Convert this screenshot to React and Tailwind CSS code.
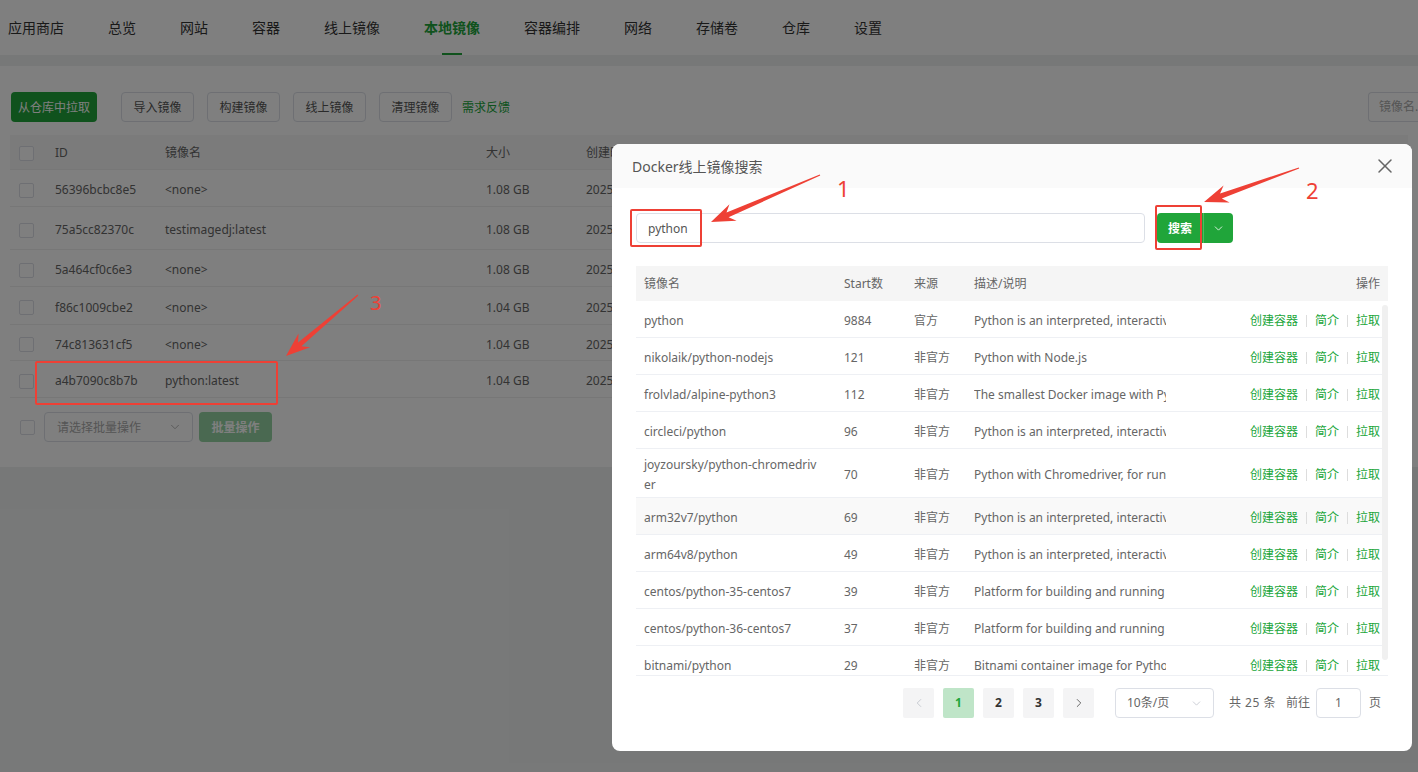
import React from 'react';
import { X, ChevronDown, ChevronLeft, ChevronRight } from 'lucide-react';

const navItems = ['应用商店', '总览', '网站', '容器', '线上镜像', '本地镜像', '容器编排', '网络', '存储卷', '仓库', '设置'];

const localImages = [
  { id: '56396bcbc8e5', name: '<none>', size: '1.08 GB', h: 'h-[37px]' },
  { id: '75a5cc82370c', name: 'testimagedj:latest', size: '1.08 GB', h: 'h-[43px]' },
  { id: '5a464cf0c6e3', name: '<none>', size: '1.08 GB', h: 'h-[37px]' },
  { id: 'f86c1009cbe2', name: '<none>', size: '1.04 GB', h: 'h-[38px]' },
  { id: '74c813631cf5', name: '<none>', size: '1.04 GB', h: 'h-[36px]' },
  { id: 'a4b7090c8b7b', name: 'python:latest', size: '1.04 GB', h: 'h-[37px]' },
];

const results = [
  { name: ['python'], stars: 9884, src: '官方', desc: 'Python is an interpreted, interactive, object-oriented, open-source programming language.' },
  { name: ['nikolaik/python-nodejs'], stars: 121, src: '非官方', desc: 'Python with Node.js' },
  { name: ['frolvlad/alpine-python3'], stars: 112, src: '非官方', desc: 'The smallest Docker image with Python 3.5 (~61MB)' },
  { name: ['circleci/python'], stars: 96, src: '非官方', desc: 'Python is an interpreted, interactive, object-oriented' },
  { name: ['joyzoursky/python-chromedriv', 'er'], stars: 70, src: '非官方', desc: 'Python with Chromedriver, for running automated tests', tall: true },
  { name: ['arm32v7/python'], stars: 69, src: '非官方', desc: 'Python is an interpreted, interactive, object-oriented', hover: true },
  { name: ['arm64v8/python'], stars: 49, src: '非官方', desc: 'Python is an interpreted, interactive, object-oriented' },
  { name: ['centos/python-35-centos7'], stars: 39, src: '非官方', desc: 'Platform for building and running Python 3.5 applications' },
  { name: ['centos/python-36-centos7'], stars: 37, src: '非官方', desc: 'Platform for building and running Python 3.6 applications' },
  { name: ['bitnami/python'], stars: 29, src: '非官方', desc: 'Bitnami container image for Python' },
];

const Checkbox = () => (
  <span className="block w-[15px] h-[15px] border border-[#dcdfe6] rounded-[2px] bg-white" />
);

const OutlineBtn = ({ children, className = '' }) => (
  <button className={`h-[30px] w-[73px] pt-[2px] border border-[#dcdfe6] rounded-[4px] bg-white text-[12px] text-[#555] ${className}`}>
    {children}
  </button>
);

// tapered arrow like the screenshot tool draws
const Arrow = ({ x1, y1, x2, y2 }) => {
  const dx = x2 - x1, dy = y2 - y1, L = Math.hypot(dx, dy);
  const ux = dx / L, uy = dy / L, nx = -uy, ny = ux;
  const head = 24, wing = 9, shaft = 2.6;
  const bx = x2 - ux * head, by = y2 - uy * head;
  const sx = x2 - ux * (head - 6), sy = y2 - uy * (head - 6);
  const pts = [
    [x1 + nx * 0.6, y1 + ny * 0.6],
    [sx + nx * shaft, sy + ny * shaft],
    [bx + nx * wing, by + ny * wing],
    [x2, y2],
    [bx - nx * wing, by - ny * wing],
    [sx - nx * shaft, sy - ny * shaft],
    [x1 - nx * 0.6, y1 - ny * 0.6],
  ];
  return <polygon points={pts.map((p) => p.join(',')).join(' ')} fill="#ee4035" />;
};

export default function App() {
  return (
    <div className="relative w-[1418px] h-[772px] overflow-hidden bg-[#eff1f1] font-['Noto_Sans','Noto_Sans_CJK_SC',sans-serif]">
      {/* top navigation */}
      <div className="h-[55px] bg-white flex items-stretch pl-[8px] gap-[44px] text-[14px] text-[#333]">
        {navItems.map((n) => (
          <div key={n} className={`relative flex items-center ${n === '本地镜像' ? 'text-[#20a53a] font-semibold' : ''}`}>
            {n}
            {n === '本地镜像' && (
              <span className="absolute bottom-0 left-1/2 -translate-x-1/2 w-[20px] h-[2px] bg-[#20a53a]" />
            )}
          </div>
        ))}
      </div>

      {/* local image list */}
      <div className="mt-[11px] bg-white px-[10px] pt-[26px] pb-[25px]">
        <div className="flex items-center -mr-[10px]">
          <button className="h-[30px] w-[86px] ml-[1px] pt-[2px] rounded-[4px] bg-[#20a53a] text-white text-[12px]">从仓库中拉取</button>
          <OutlineBtn className="ml-[24px]">导入镜像</OutlineBtn>
          <OutlineBtn className="ml-[13px]">构建镜像</OutlineBtn>
          <OutlineBtn className="ml-[13px]">线上镜像</OutlineBtn>
          <OutlineBtn className="ml-[13px]">清理镜像</OutlineBtn>
          <span className="ml-[10px] pt-[2px] text-[12px] text-[#20a53a]">需求反馈</span>
          <div className="ml-auto w-[50px] h-[30px] border border-r-0 border-[#dcdfe6] rounded-l-[4px] flex items-center pl-[10px] text-[12px] text-[#aaa] overflow-hidden whitespace-nowrap">
            镜像名...
          </div>
        </div>

        <div className="mt-[13px] text-[12px] text-[#666]">
          <div className="h-[35px] pt-[2px] bg-[#f7f7f7] flex items-center border-b border-[#eee]">
            <div className="w-[35px] pl-[9px]"><Checkbox /></div>
            <div className="w-[120px] pl-[10px]">ID</div>
            <div className="w-[321px]">镜像名</div>
            <div className="w-[100px]">大小</div>
            <div className="flex-1">创建时间</div>
          </div>
          {localImages.map((r) => (
            <div key={r.id} className={`${r.h} pt-[4px] flex items-center border-b border-[#eee]`}>
              <div className="w-[35px] pl-[9px]"><Checkbox /></div>
              <div className="w-[120px] pl-[10px]">{r.id}</div>
              <div className="w-[321px]">{r.name}</div>
              <div className="w-[100px]">{r.size}</div>
              <div className="flex-1">2025-03-18 15:42:10</div>
            </div>
          ))}
          <div className="pt-[14px] flex items-center">
            <div className="pl-[10px]"><Checkbox /></div>
            <div className="ml-[9px] w-[149px] h-[30px] border border-[#dcdfe6] rounded-[4px] flex items-center justify-between pl-[12px] pr-[10px] text-[#aaa]">
              <span className="pt-[2px]">请选择批量操作</span>
              <ChevronDown size={14} strokeWidth={1.5} className="text-[#aaa]" />
            </div>
            <button className="ml-[6px] w-[73px] h-[30px] pt-[2px] rounded-[4px] bg-[#94d3a2] text-white text-[12px] font-semibold">批量操作</button>
          </div>
        </div>
      </div>

      {/* mask */}
      <div className="absolute inset-0 bg-black/50" />

      {/* dialog */}
      <div className="absolute left-[612px] top-[144px] w-[800px] h-[607px] bg-white rounded-[8px] overflow-hidden flex flex-col">
        <div className="h-[44px] bg-[#fafafa] flex items-center justify-between pl-[20px] pr-[15px]">
          <span className="text-[14px] text-[#555]">Docker线上镜像搜索</span>
          <X size={24} strokeWidth={1.5} className="text-[#666]" />
        </div>
        <div className="px-[24px] pt-[25px]">
          <div className="flex items-center h-[30px]">
            <div className="w-[509px] h-[30px] pt-[2px] border border-[#dcdfe6] rounded-[4px] flex items-center pl-[11px] text-[12px] text-[#555]">python</div>
            <div className="ml-[12px] flex h-[30px] rounded-[4px] overflow-hidden bg-[#20a53a] text-white">
              <span className="w-[46px] pt-[2px] flex items-center justify-center text-[12px] font-semibold">搜索</span>
              <span className="w-[30px] flex items-center justify-center border-l border-[#4cbb5f]">
                <ChevronDown size={13} strokeWidth={1.5} />
              </span>
            </div>
          </div>

          <div className="mt-[23px] w-[752px] text-[12px] text-[#666]">
            <div className="h-[35px] bg-[#f5f5f5] flex items-center">
              <div className="w-[200px] pl-[8px]">镜像名</div>
              <div className="w-[70px] pl-[8px]">Start数</div>
              <div className="w-[60px] pl-[8px]">来源</div>
              <div className="w-[210px] pl-[8px]">描述/说明</div>
              <div className="w-[212px] pr-[8px] text-right">操作</div>
            </div>
            <div className="relative h-[375px] overflow-hidden border-b border-[#eef0f4]">
              {results.map((r) => (
                <div key={r.name[0]} className={`${r.tall ? 'h-[49px]' : 'h-[37px]'} ${r.hover ? 'bg-[#f9f9f9]' : ''} pt-[4px] flex items-center border-b border-[#eef0f4]`}>
                  <div className="w-[200px] pl-[8px] leading-[20px]">
                    {r.name.map((line) => (
                      <div key={line} className="whitespace-nowrap">{line}</div>
                    ))}
                  </div>
                  <div className="w-[70px] pl-[8px]">{r.stars}</div>
                  <div className="w-[60px] pl-[8px]">{r.src}</div>
                  <div className="w-[210px] pl-[8px] pr-[10px]">
                    <div className="overflow-hidden whitespace-nowrap">{r.desc}</div>
                  </div>
                  <div className="w-[212px] pr-[8px] flex items-center justify-end text-[#20a53a]">
                    <span>创建容器</span>
                    <span className="mx-[8px] w-px h-[12px] bg-[#ddd]" />
                    <span>简介</span>
                    <span className="mx-[8px] w-px h-[12px] bg-[#ddd]" />
                    <span>拉取</span>
                  </div>
                </div>
              ))}
              <div className="absolute top-[4px] right-0 w-[6px] h-[355px] rounded-[3px] bg-[#f0f0f0]" />
            </div>
          </div>

          <div className="mt-[12px] h-[30px] flex items-center justify-end pr-[7px] text-[12px] text-[#666]">
            <span className="w-[31px] h-[30px] rounded-[2px] bg-[#f4f4f5] flex items-center justify-center text-[#c0c4cc]">
              <ChevronLeft size={14} strokeWidth={1.5} />
            </span>
            <span className="ml-[9px] w-[31px] h-[30px] rounded-[2px] bg-[#bfe5c8] flex items-center justify-center text-[#20a53a] font-bold">1</span>
            <span className="ml-[9px] w-[31px] h-[30px] rounded-[2px] bg-[#f4f4f5] flex items-center justify-center text-[#333] font-bold">2</span>
            <span className="ml-[9px] w-[31px] h-[30px] rounded-[2px] bg-[#f4f4f5] flex items-center justify-center text-[#333] font-bold">3</span>
            <span className="ml-[9px] w-[31px] h-[30px] rounded-[2px] bg-[#f4f4f5] flex items-center justify-center text-[#555]">
              <ChevronRight size={14} strokeWidth={1.5} />
            </span>
            <div className="ml-[21px] w-[99px] h-[30px] border border-[#dcdfe6] rounded-[4px] flex items-center justify-between pl-[11px] pr-[10px]">
              10条/页
              <ChevronDown size={13} strokeWidth={1.5} className="text-[#c0c4cc]" />
            </div>
            <span className="ml-[15px] tracking-[0.5px]">共 25 条</span>
            <span className="ml-[10px]">前往</span>
            <div className="ml-[6px] w-[45px] h-[30px] border border-[#dcdfe6] rounded-[4px] flex items-center justify-center">1</div>
            <span className="ml-[8px]">页</span>
          </div>
        </div>
      </div>

      {/* annotations */}
      <div className="absolute left-[630px] top-[209px] w-[72px] h-[38px] border-2 border-[#ee4035] rounded-[2px]" />
      <div className="absolute left-[1155px] top-[205px] w-[47px] h-[45px] border-2 border-[#ee4035] rounded-[2px]" />
      <div className="absolute left-[35px] top-[361px] w-[243px] h-[44px] border-2 border-[#ee4035] rounded-[2px]" />
      <svg className="absolute inset-0 pointer-events-none" width="1418" height="772">
        <Arrow x1={820} y1={175} x2={711} y2={222} />
        <Arrow x1={1299} y1={168} x2={1204} y2={202} />
        <Arrow x1={358} y1={295} x2={286} y2={356} />
      </svg>
      <span className="absolute left-[837px] top-[177px] text-[22px] leading-none text-[#ee4035]">1</span>
      <span className="absolute left-[1306px] top-[179px] text-[22px] leading-none text-[#ee4035]">2</span>
      <span className="absolute left-[370px] top-[293px] text-[20px] leading-none text-[#ee4035]">3</span>
    </div>
  );
}
